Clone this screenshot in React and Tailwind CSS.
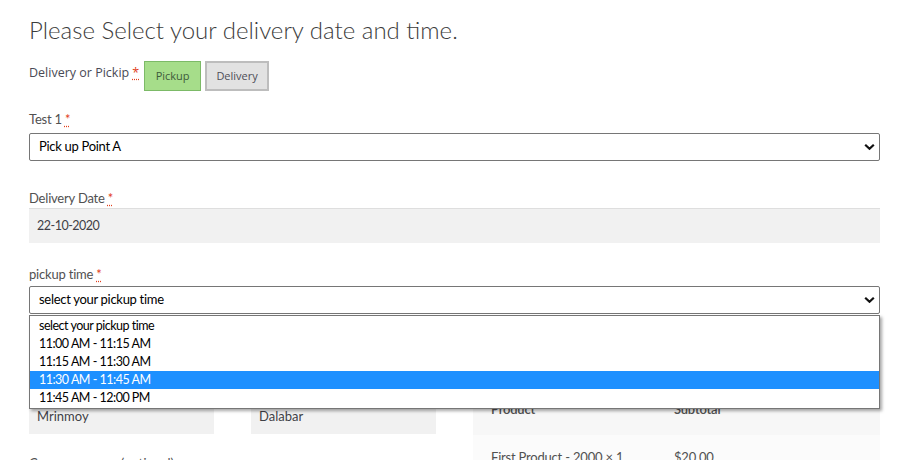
import React, { useState } from 'react';

const Req = () => (
  <abbr className="ml-[3px] text-[#e2401c] underline decoration-dotted underline-offset-2" title="required">*</abbr>
);

const Chevron = () => (
  <svg width="11" height="7" viewBox="0 0 11 7" className="absolute right-[5px] top-1/2 -translate-y-1/2">
    <path d="M1.2 1.2 L5.5 5.3 L9.8 1.2" fill="none" stroke="#111" strokeWidth="2.2" />
  </svg>
);

const SelectBox = ({ value, children }) => (
  <div className="relative">
    <div className="h-[28px] border border-[#767676] rounded-[2px] bg-white pl-[9px] flex items-center text-[13px] tracking-[-0.3px] text-black">
      {value}
    </div>
    <Chevron />
    {children}
  </div>
);

const times = ['select your pickup time', '11:00 AM - 11:15 AM', '11:15 AM - 11:30 AM', '11:30 AM - 11:45 AM', '11:45 AM - 12:00 PM'];

const App = () => {
  const [mode, setMode] = useState('Pickup');
  const [selected, setSelected] = useState(3);

  return (
    <div className="w-[924px] h-[460px] overflow-hidden bg-white pl-[29px] pr-[44px] pt-[14px] text-[#515151]" style={{ fontFamily: 'Lato, "Noto Sans", sans-serif' }}>
      <h1 className="text-[24px] leading-[32px] font-light text-[#3c3c3c]">Please Select your delivery date and time.</h1>

      <div className="mt-[15px] flex items-center text-[12.5px]" style={{ fontFamily: '"Open Sans", sans-serif' }}>
        <span className="text-[#4a4a55] mr-[5px] -mt-[6px]">Delivery or Pickip<Req /></span>
        {['Pickup', 'Delivery'].map((m) => (
          <button
            key={m}
            onClick={() => setMode(m)}
            className={
              mode === m
                ? 'h-[30px] w-[57px] mr-[4px] text-[11px] bg-[#a6dd8a] border border-[#7cba67] text-[#3d5b3a]'
                : 'h-[30px] w-[64px] mr-[4px] text-[11px] bg-[#e2e2e2] border-2 border-[#bdbdbd] text-[#4e4e58]'
            }
          >
            {m}
          </button>
        ))}
      </div>

      <div className="mt-[19px]">
        <label className="block text-[13px] leading-[18px] mb-[5px] tracking-[-0.2px]">Test 1<Req /></label>
        <SelectBox value="Pick up Point A" />
      </div>

      <div className="mt-[28px]">
        <label className="block text-[13px] leading-[18px] mb-[1px] tracking-[-0.2px]">Delivery Date<Req /></label>
        <div className="h-[35px] bg-[#f1f1f1] border-t border-[#dedede] pl-[8px] flex items-center text-[12.5px] tracking-[-0.5px] text-[#3f3f46]">22-10-2020</div>
      </div>

      <div className="mt-[22px]">
        <label className="block text-[13px] leading-[18px] mb-[3px] tracking-[-0.2px]">pickup time<Req /></label>
        <SelectBox value="select your pickup time">
          <ul className="absolute left-0 right-0 top-[29px] z-10 bg-white border border-[#767676] shadow-[2px_2px_3px_rgba(0,0,0,0.35)] py-px">
            {times.map((t, i) => (
              <li
                key={t}
                onMouseEnter={() => setSelected(i)}
                className={`h-[18px] leading-[18px] pl-[9px] text-[12.5px] tracking-[-0.5px] ${i === selected ? 'bg-[#1e90ff] text-white' : 'text-black'}`}
              >
                {t}
              </li>
            ))}
          </ul>
        </SelectBox>
      </div>

      <div className="mt-[63px] grid grid-cols-2 gap-[37px]">
        <div>
          <div className="grid grid-cols-2 gap-[37px]">
            <div>
              <label className="block text-[13px] leading-[18px] mb-[4px]">First name<Req /></label>
              <div className="h-[35px] bg-[#f1f1f1] pl-[8px] flex items-center text-[13px] text-[#3f3f46]">Mrinmoy</div>
            </div>
            <div>
              <label className="block text-[13px] leading-[18px] mb-[4px]">Last name<Req /></label>
              <div className="h-[35px] bg-[#f1f1f1] pl-[8px] flex items-center text-[13px] text-[#3f3f46]">Dalabar</div>
            </div>
          </div>
          <label className="block mt-[20px] text-[13px] leading-[18px]">Company name (optional)</label>
        </div>

        <table className="w-full text-[13px] text-[#515151] mt-[8px] self-start tracking-[-0.2px]">
          <thead>
            <tr className="bg-[#f7f7f7]">
              <th className="h-[50px] w-[183px] pl-[18px] text-left font-semibold">Product</th>
              <th className="h-[50px] pl-[18px] text-left font-semibold">Subtotal</th>
            </tr>
          </thead>
          <tbody>
            <tr className="bg-[#fbfbfb]">
              <td className="h-[46px] pl-[18px]">First Product - 2000 <strong className="font-normal">× 1</strong></td>
              <td className="h-[46px] pl-[18px]">$20.00</td>
            </tr>
          </tbody>
        </table>
      </div>
    </div>
  );
};

export default App;
